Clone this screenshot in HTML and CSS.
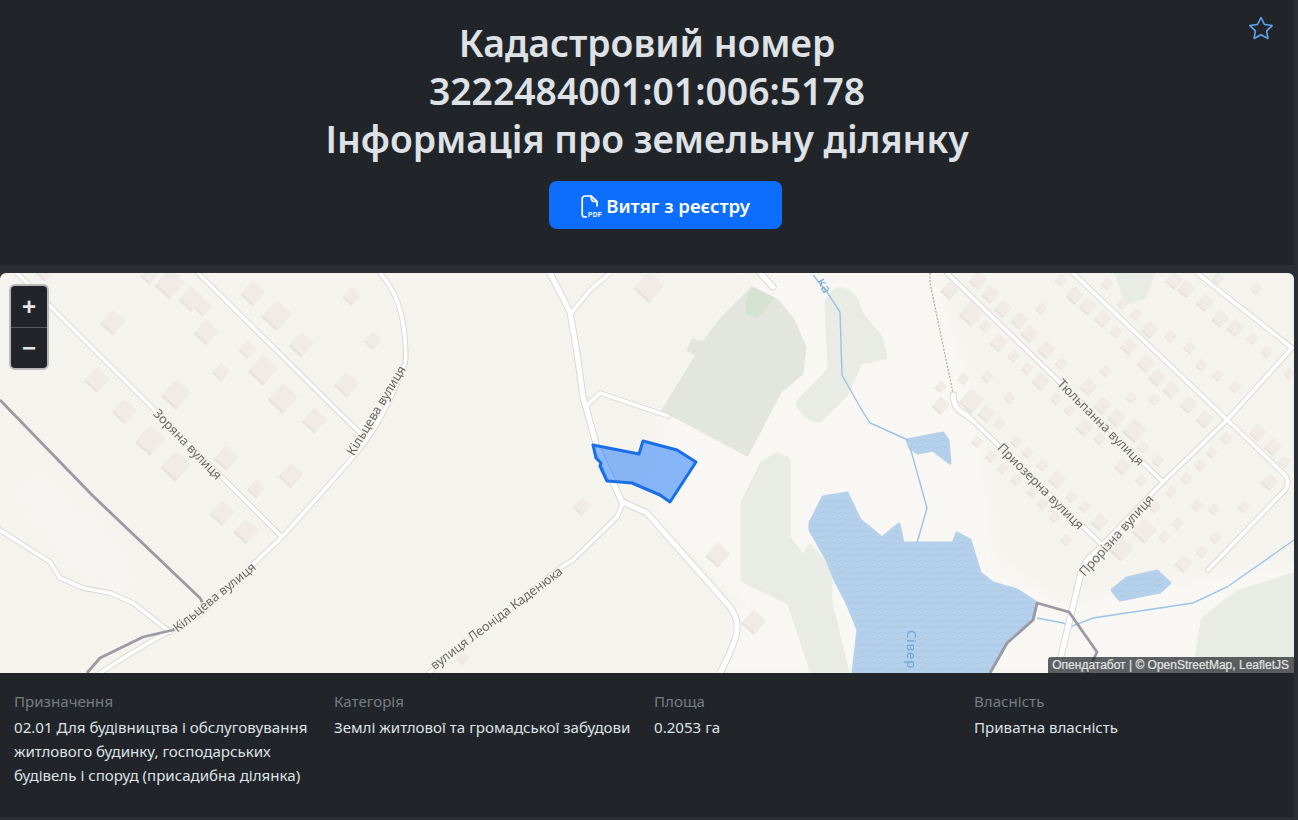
FILE: index.html
```html
<!DOCTYPE html>
<html lang="uk">
<head>
<meta charset="utf-8">
<title>Кадастровий номер 3222484001:01:006:5178</title>
<link rel="stylesheet" href="styles.css">
</head>
<body>
<main class="page">
  <header class="hero">
    <svg class="star" viewBox="0 0 16 16" width="24" height="24"><path d="M2.866 14.85c-.078.444.36.791.746.593l4.39-2.256 4.389 2.256c.386.198.824-.149.746-.592l-.83-4.73 3.522-3.356c.33-.314.16-.888-.282-.95l-4.898-.696L8.465.792a.513.513 0 0 0-.927 0L5.354 5.12l-4.898.696c-.441.062-.612.636-.283.95l3.523 3.356-.83 4.73zm4.905-2.767-3.686 1.894.694-3.957a.56.56 0 0 0-.163-.505L1.71 6.745l4.052-.576a.53.53 0 0 0 .393-.288L8 2.223l1.847 3.658a.53.53 0 0 0 .393.288l4.052.575-2.906 2.77a.56.56 0 0 0-.163.506l.694 3.957-3.686-1.894a.5.5 0 0 0-.461 0z"/></svg>
    <h1 class="title">Кадастровий номер<br>3222484001:01:006:5178<br>Інформація про земельну ділянку</h1>
    <a class="btn" href="#">
      <svg class="pdf" viewBox="0 0 21 23" width="21" height="23">
        <path class="pdf-line" d="M10 1H4a2.800 2.800 0 0 0-2.800 2.800v15.400A2.800 2.800 0 0 0 4 22h1.500M10 1c0 3 .5 5 2.500 5.500h3.500V11M10 1l6 5.500"/>
        <text class="pdf-text" x="7" y="21.500">PDF</text>
      </svg>
      <span class="btn-text">Витяг з реєстру</span>
    </a>
  </header>

  <section class="map">
    <svg class="tiles" viewBox="0 273 1294 400" width="1294" height="400">
      <defs>
        <pattern id="waves" width="10" height="6" patternUnits="userSpaceOnUse">
          <rect width="10" height="6" fill="#b5d0ea"/>
          <path d="M0 3q2.500-2.500 5 0t5 0" fill="none" stroke="#a9c8e6" stroke-width="1"/>
        </pattern>
        <g id="bl"><rect class="bs" x="-30" y="-25" width="60" height="62" transform="rotate(42)"/><rect class="bt" x="-30" y="-33" width="60" height="62" transform="rotate(42)"/></g>
        <g id="bm"><rect class="bs" x="-25" y="-19" width="50" height="50" transform="rotate(42)"/><rect class="bt" x="-25" y="-26" width="50" height="50" transform="rotate(42)"/></g>
        <g id="bn"><rect class="bs" x="-18" y="-13" width="36" height="36" transform="rotate(42)"/><rect class="bt" x="-18" y="-19" width="36" height="36" transform="rotate(42)"/></g>
        <g id="bx"><rect class="bs" x="-13" y="-9" width="25" height="25" transform="rotate(42)"/><rect class="bt" x="-13" y="-13" width="25" height="25" transform="rotate(42)"/></g>
        <g id="roads">
          <path d="M17 273 282 537"/>
          <path d="M198 273 362 435"/>
          <path d="M380 273Q400 295 404 330T403 367Q385 420 353 457T282 537L197 617Q150 640 100 673"/>
          <path d="M0 530 50 562 60 578 83 588 110 593 133 603 170 632"/>
          <path d="M572 312 590 290 610 273"/>
          <path d="M587 405 600 393 668 416"/>
          <path d="M623 503 617 517 573 560 560 568 430 672"/>
          <path d="M947 273 1163 482"/>
          <path d="M1073 273 1284 474Q1291 482 1285 490L1208 570"/>
          <path d="M1197 273 1292 348 1227 420 1162 483 1100 547 1090 557"/>
          <path d="M970 418 1100 543"/>
        </g>
        <g id="mains">
          <path d="M550 273 570 312 577 353 583 397 597 447 622 502"/>
          <path d="M623 502 647 513 730 607Q738 618 737 630T720 673"/>
          <path d="M760 273 773 287"/>
          <path d="M953 395Q954 407 960 411T970 418"/>
          <path d="M1090 557Q1083 565 1080 577L1057 673"/>
        </g>
      </defs>
      <rect class="land" x="0" y="273" width="1294" height="400"/>
      <path class="lighter" d="M660 410 760 273H940L975 390 1000 560 1060 600 1294 560V673H720L740 600 650 510z"/>
      <path class="lighter-soft" d="M10 490 40 470 120 540 140 610 60 560z"/>
      <path class="wood" d="M827 303Q832 290 840 290 855 290 860 313L880 337 885 357 860 362Q848 390 845 395L820 420Q805 420 798 403L830 370z"/>
      <path class="wood" d="M777 455 788 460 788 537 803 558 810 547 830 570 830 603 847 673H813L790 603 743 580 743 503 763 463z"/>
      <path class="wood" d="M1195 673 1203 620 1237 593 1294 575V673z"/>
      <path class="wood" d="M1117 273H1153L1143 297 1127 302z"/>
      <path class="park" d="M752 288 777 300 793 320 805 347 802 373 780 392 747 455 663 410 697 355 688 350 693 340 703 343 723 317z"/>
      <path class="meadow" d="M747 300 752 288 773 298 757 317 747 313z"/>
      <path class="water" d="M810 523 823 497 847 493 860 520 882 538 899 524 903 543 953 543 957 533 970 540 980 573 993 583 1017 590 1037 603 1033 620 1007 643 990 673H853L858 630 847 603 835 580 827 560 810 530z"/>
      <path class="water" d="M907 440 943 433 948 440 950 463 933 450 918 453 910 448z"/>
      <path class="water" d="M1112 590 1127 578 1157 571 1170 583 1160 592 1120 600z"/>
      <g class="river">
        <path d="M813 275 827 292 840 312 842 375 860 407 870 423 908 440"/>
        <path d="M910 447 927 508 917 543"/>
        <path d="M1037 618 1063 623 1070 627 1093 618 1193 603 1227 587 1294 540"/>
      </g>
      <path class="footpath" d="M930 273V283L953 393"/>

      <g transform="translate(0 270) scale(.3333)">
        <use href="#bm" x="340" y="155"/><use href="#bl" x="510" y="40"/><use href="#bm" x="575" y="85"/><use href="#bn" x="610" y="110"/>
        <use href="#bm" x="620" y="185"/><use href="#bm" x="760" y="68"/><use href="#bl" x="832" y="135"/><use href="#bm" x="905" y="222"/>
        <use href="#bn" x="745" y="238"/><use href="#bl" x="790" y="298"/><use href="#bl" x="850" y="383"/><use href="#bn" x="665" y="305"/>
        <use href="#bn" x="1057" y="78"/><use href="#bn" x="1120" y="210"/><use href="#bm" x="1042" y="342"/><use href="#bm" x="945" y="450"/>
        <use href="#bm" x="292" y="328"/><use href="#bl" x="530" y="372"/><use href="#bm" x="375" y="422"/><use href="#bm" x="680" y="562"/>
        <use href="#bl" x="452" y="510"/><use href="#bl" x="528" y="587"/><use href="#bn" x="770" y="655"/><use href="#bm" x="875" y="615"/>
        <use href="#bm" x="668" y="727"/><use href="#bm" x="740" y="782"/><use href="#bn" x="450" y="15"/><use href="#bn" x="135" y="5"/>
      </g>
      <g transform="translate(430 270) scale(.3333)">
        <use href="#bl" x="658" y="50"/><use href="#bn" x="457" y="708"/><use href="#bm" x="865" y="853"/><use href="#bm" x="973" y="1055"/><use href="#bx" x="100" y="1165"/>
      </g>
      <g transform="translate(860 270) scale(.3333)">
        <use href="#bn" x="270" y="60"/><use href="#bn" x="355" y="30"/><use href="#bn" x="392" y="72"/><use href="#bm" x="335" y="130"/><use href="#bn" x="430" y="115"/><use href="#bx" x="378" y="168"/><use href="#bn" x="480" y="150"/><use href="#bn" x="510" y="190"/><use href="#bn" x="417" y="218"/><use href="#bx" x="462" y="258"/><use href="#bx" x="503" y="295"/><use href="#bx" x="545" y="115"/><use href="#bn" x="560" y="238"/><use href="#bx" x="605" y="280"/><use href="#bn" x="543" y="333"/>
        <use href="#bx" x="605" y="30"/><use href="#bn" x="645" y="75"/><use href="#bn" x="685" y="108"/><use href="#bn" x="730" y="145"/><use href="#bx" x="770" y="185"/><use href="#bn" x="808" y="228"/><use href="#bn" x="858" y="280"/><use href="#bx" x="738" y="302"/><use href="#bn" x="687" y="350"/><use href="#bn" x="893" y="322"/><use href="#bn" x="935" y="358"/><use href="#bx" x="815" y="382"/><use href="#bx" x="885" y="388"/><use href="#bn" x="728" y="405"/><use href="#bx" x="590" y="385"/><use href="#bx" x="630" y="420"/><use href="#bn" x="770" y="443"/><use href="#bn" x="675" y="472"/><use href="#bm" x="825" y="480"/><use href="#bx" x="720" y="505"/><use href="#bx" x="850" y="530"/><use href="#bx" x="895" y="572"/><use href="#bn" x="790" y="588"/><use href="#bx" x="845" y="630"/>
        <use href="#bx" x="830" y="133"/><use href="#bx" x="790" y="100"/><use href="#bn" x="870" y="178"/><use href="#bx" x="933" y="198"/><use href="#bx" x="990" y="232"/><use href="#bx" x="1025" y="285"/><use href="#bx" x="1075" y="315"/><use href="#bx" x="1127" y="350"/><use href="#bn" x="987" y="403"/><use href="#bn" x="1035" y="447"/><use href="#bx" x="1100" y="505"/><use href="#bn" x="1195" y="487"/><use href="#bn" x="1240" y="530"/><use href="#bx" x="1275" y="575"/><use href="#bn" x="1230" y="635"/><use href="#bx" x="1057" y="548"/><use href="#bx" x="1022" y="585"/><use href="#bx" x="980" y="625"/><use href="#bx" x="935" y="665"/><use href="#bx" x="1013" y="705"/><use href="#bx" x="1063" y="717"/><use href="#bx" x="1152" y="710"/><use href="#bx" x="955" y="760"/><use href="#bx" x="915" y="800"/><use href="#bx" x="1067" y="803"/><use href="#bx" x="1028" y="845"/><use href="#bn" x="972" y="880"/><use href="#bm" x="855" y="782"/><use href="#bm" x="785" y="835"/><use href="#bx" x="885" y="710"/>
        <use href="#bn" x="943" y="30"/><use href="#bn" x="980" y="55"/><use href="#bn" x="1035" y="97"/><use href="#bn" x="1082" y="145"/><use href="#bn" x="1127" y="172"/><use href="#bx" x="1178" y="205"/><use href="#bx" x="1222" y="245"/><use href="#bx" x="1190" y="55"/><use href="#bx" x="1075" y="25"/><use href="#bx" x="743" y="40"/><use href="#bx" x="1290" y="310"/>
        <use href="#bx" x="312" y="325"/><use href="#bx" x="383" y="320"/><use href="#bx" x="450" y="382"/><use href="#bm" x="335" y="392"/><use href="#bn" x="380" y="430"/><use href="#bx" x="420" y="460"/><use href="#bx" x="243" y="350"/><use href="#bn" x="243" y="405"/><use href="#bx" x="352" y="515"/><use href="#bx" x="395" y="560"/><use href="#bx" x="430" y="595"/><use href="#bx" x="470" y="515"/><use href="#bx" x="505" y="548"/><use href="#bx" x="470" y="628"/><use href="#bx" x="548" y="585"/><use href="#bn" x="592" y="628"/><use href="#bx" x="635" y="680"/><use href="#bx" x="675" y="710"/><use href="#bn" x="720" y="755"/><use href="#bx" x="520" y="665"/><use href="#bx" x="550" y="700"/><use href="#bx" x="585" y="740"/><use href="#bx" x="620" y="810"/>
      </g>

      <use href="#roads" class="road-case"/>
      <use href="#mains" class="main-case"/>
      <use href="#roads" class="road-fill"/>
      <use href="#mains" class="main-fill"/>
      <g class="border">
        <path d="M0 400 92 495 200 598Q204 603 201 609L183 623 173 630 143 637 100 658 87 673"/>
        <path d="M990 673 1007 643 1033 620 1037 603 1069 612 1097 652 1087 673"/>
      </g>
      <path class="parcel" d="M593 445 639 454 643 441 677 450 696 462 670 502 660 495 632 483 607 481 600 466 601 463 596 458z"/>
      <g class="labels">
        <text transform="translate(187 445) rotate(46)">Зоряна вулиця</text>
        <text transform="translate(377 411) rotate(-59)">Кільцева вулиця</text>
        <text transform="translate(215 598) rotate(-39)">Кільцева вулиця</text>
        <text transform="translate(497 619) rotate(-37)">вулиця Леоніда Каденюка</text>
        <text transform="translate(1100 423) rotate(45)">Тюльпанна вулиця</text>
        <text transform="translate(1040 487) rotate(45)">Приозерна вулиця</text>
        <text transform="translate(1117 536) rotate(-48)">Прорізна вулиця</text>
      </g>
      <g class="water-labels">
        <text transform="translate(817 281) rotate(62)">ка</text>
        <text transform="translate(907 630) rotate(90)">Сівер</text>
      </g>
    </svg>
    <div class="zoom">
      <span class="zoom-btn">+</span>
      <span class="zoom-btn">−</span>
    </div>
    <div class="attrib">Опендатабот | © OpenStreetMap, LeafletJS</div>
  </section>

  <section class="facts">
    <div class="fact"><div class="fact-label">Призначення</div><div class="fact-value">02.01 Для будівництва і обслуговування житлового будинку, господарських будівель і споруд (присадибна ділянка)</div></div>
    <div class="fact"><div class="fact-label">Категорія</div><div class="fact-value">Землі житлової та громадської забудови</div></div>
    <div class="fact"><div class="fact-label">Площа</div><div class="fact-value">0.2053 га</div></div>
    <div class="fact"><div class="fact-label">Власність</div><div class="fact-value">Приватна власність</div></div>
  </section>
</main>
</body>
</html>
```
FILE: styles.css
```css
* { box-sizing: border-box; }
html, body { margin: 0; height: 100%; }
body {
  background: #2b2f33;
  color: #dee2e6;
  font-family: "Noto Sans", "Open Sans", sans-serif;
  overflow: hidden;
}
.page { width: 1294px; display: flex; flex-direction: column; gap: 8px; }
.hero {
  position: relative;
  background: #212529;
  height: 265px;
  padding-top: 19px;
  display: flex;
  flex-direction: column;
  align-items: center;
}
.star { position: absolute; top: 16px; right: 21px; fill: #63a4ee; }
.title {
  margin: 0;
  font-size: 37.300px;
  line-height: 48px;
  font-weight: 600;
  text-align: center;
  color: #dee2e6;
}
.btn {
  margin: 18px 0 0 37px;
  width: 233px;
  height: 48px;
  border-radius: 8px;
  background: #0d6efd;
  color: #fff;
  font-size: 18.600px;
  font-weight: 600;
  text-decoration: none;
  display: flex;
  align-items: center;
  justify-content: center;
  gap: 4px;
}
.btn-text { margin-top: 1px; }
.pdf { margin-top: 3px; overflow: visible; }
.pdf-line { fill: none; stroke: #fff; stroke-width: 1.7; stroke-linecap: round; stroke-linejoin: round; }
.pdf-text { font: 700 6.500px "Liberation Sans", sans-serif; fill: #fff; letter-spacing: .3px; }
.map { position: relative; height: 400px; border-radius: 6px 6px 0 0; overflow: hidden; }
.tiles { display: block; filter: blur(.35px); }
.land { fill: #f5f3ee; }
.lighter { fill: #f8f7f4; filter: blur(7px); }
.lighter-soft { fill: #f7f5f2; filter: blur(8px); }
.wood { fill: #e9ebe5; stroke: #e9ebe5; stroke-width: 5; stroke-linejoin: round; }
.park { fill: #e2e6df; stroke: #e2e6df; stroke-width: 3; stroke-linejoin: round; }
.meadow { fill: #d6e2d1; stroke: #d6e2d1; stroke-width: 2; stroke-linejoin: round; }
.water { fill: url(#waves); stroke: #b5d0ea; stroke-width: 3; stroke-linejoin: round; }
.river { fill: none; stroke: #9cc3e6; stroke-width: 1.4; }
.footpath { fill: none; stroke: #b3a79e; stroke-width: 1.2; stroke-dasharray: 2 1.500; }
.bt { fill: #f0ebe7; }
.bs { fill: #e7e2dd; }
.road-case, .main-case { fill: none; stroke: #d9d6d1; stroke-linejoin: round; stroke-linecap: round; }
.road-fill, .main-fill { fill: none; stroke: #fff; stroke-linejoin: round; stroke-linecap: round; }
.road-case { stroke-width: 5.500; }
.road-fill { stroke-width: 3.800; }
.main-case { stroke-width: 7; }
.main-fill { stroke-width: 5.200; }
.border { fill: none; stroke: #9b99a1; stroke-width: 2.800; stroke-linejoin: round; }
.parcel { fill: #0d6efd; fill-opacity: .48; stroke: #1b6fe6; stroke-width: 3; stroke-linejoin: round; }
.labels text {
  font: 12.800px "Noto Sans", sans-serif;
  fill: #6c6965;
  text-anchor: middle;
  dominant-baseline: middle;
  stroke: #f6f4f0;
  stroke-width: 2.500;
  paint-order: stroke;
}
.water-labels text { font: 13px "Noto Sans", sans-serif; fill: #6fa6d8; letter-spacing: 1px; }
.zoom {
  position: absolute;
  top: 11px;
  left: 9px;
  width: 40px;
  border: 2px solid #b9b9b7;
  border-radius: 6px;
  background: #212529;
  display: flex;
  flex-direction: column;
  overflow: hidden;
}
.zoom-btn {
  height: 41px;
  display: flex;
  align-items: center;
  justify-content: center;
  color: #e4e6e8;
  font: 700 24px "Liberation Sans", sans-serif;
}
.zoom-btn + .zoom-btn { border-top: 1px solid #555a5f; }
.attrib {
  position: absolute;
  right: 0;
  bottom: 0;
  height: 16px;
  padding: 0 5px 0 4px;
  background: rgba(33, 37, 41, .72);
  border-top-left-radius: 3px;
  color: #e3e5e7;
  font: 12px/16px "Liberation Sans", sans-serif;
  -webkit-text-stroke: .2px #e3e5e7;
}
.facts {
  margin-top: -8px;
  height: 144px;
  background: #212529;
  padding: 16px 0 0 14px;
  display: grid;
  grid-template-columns: repeat(4, 320px);
  font-size: 15.100px;
  line-height: 24px;
}
.fact { padding-right: 12px; }
.fact-label { color: #767c82; margin-bottom: 2px; }
.fact-value { color: #dee2e6; }
```
